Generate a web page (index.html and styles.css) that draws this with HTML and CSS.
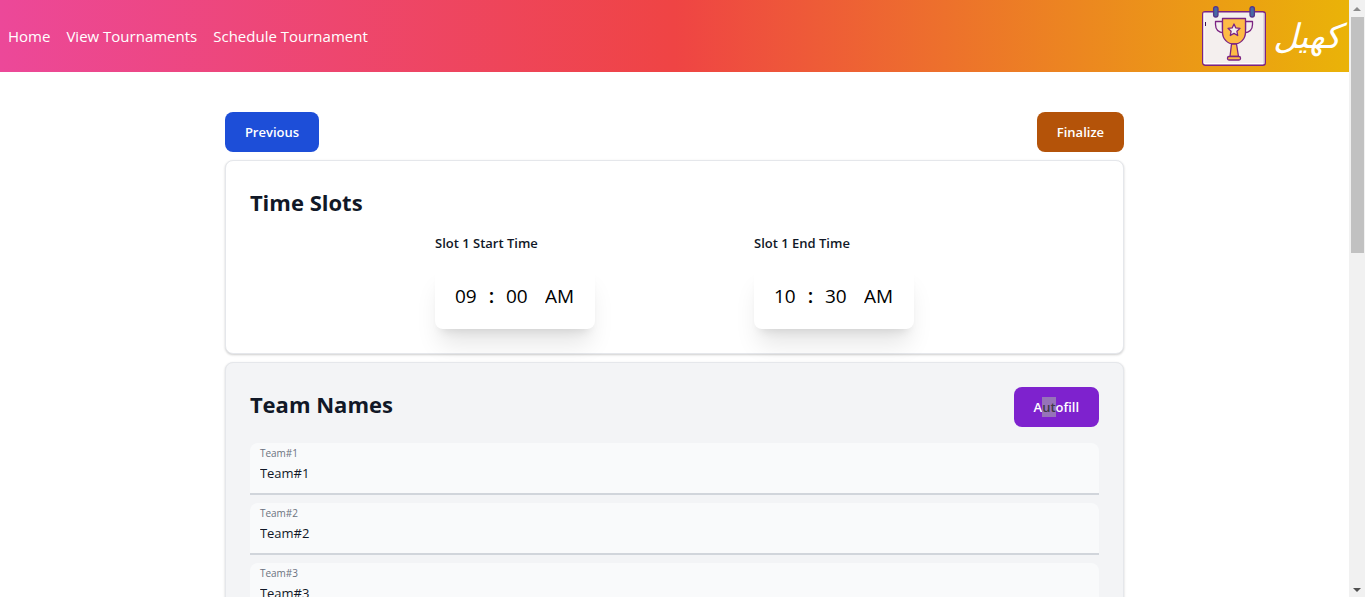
FILE: index.html
```html
<!DOCTYPE html>
<html lang="en">
<head>
<meta charset="utf-8">
<meta name="viewport" content="width=device-width, initial-scale=1">
<title>Schedule Tournament</title>
<link rel="stylesheet" href="styles.css">
</head>
<body>
<div class="shell">
  <div class="page">
    <header class="topbar">
      <nav class="nav">
        <a class="nav-link" href="#home">Home</a>
        <a class="nav-link" href="#tournaments">View Tournaments</a>
        <a class="nav-link" href="#schedule">Schedule Tournament</a>
      </nav>
      <div class="brand">
        <svg class="brand-icon" viewBox="0 0 70 68" width="70" height="68" aria-hidden="true">
          <rect x="3.7" y="9.7" width="62.6" height="53.6" rx="2.5" fill="#f4efee" stroke="#7b2382" stroke-width="1.4"/>
          <path d="M5 10.500V61.500H65" fill="none" stroke="#fff" stroke-width="1"/>
          <path d="M65 11V62" stroke="#cbbccd" stroke-width="1"/>
          <path d="M6.500 20v4" stroke="#3d1650" stroke-width="1"/>
          <rect x="14.600" y="4.600" width="4.400" height="10.400" rx="2.200" fill="#4768a5" stroke="#54358b" stroke-width="1.300"/>
          <rect x="51" y="4.600" width="4.400" height="10.400" rx="2.200" fill="#4768a5" stroke="#54358b" stroke-width="1.300"/>
          <g stroke="#7b2382" stroke-width="1.300" stroke-linejoin="round">
            <path d="M23.500 19.500h-7v3c0 5 3 8 8.500 8.500l-1.500-3.500z" fill="#f4efee"/>
            <path d="M46.500 19.500h7v3c0 5-3 8-8.500 8.500l1.500-3.500z" fill="#f4efee"/>
            <path d="M23.500 16.500h23V30c0 7-5 12-11.500 12s-11.500-5-11.500-12z" fill="#fdbb45"/>
            <path d="M32.500 42h5l2 12.500h-8.500z" fill="#fdbb45"/>
            <rect x="28.500" y="54.500" width="13" height="3.500" rx="1.500" fill="#fdbb45"/>
            <path d="M35 22l1.800 3.900 4.200.5-3.100 2.900.8 4.200-3.700-2.100-3.700 2.100.8-4.200-3.100-2.900 4.200-.5z" fill="#f4efee"/>
          </g>
        </svg>
        <span class="brand-name" lang="ur" dir="rtl">کھیل</span>
      </div>
    </header>

    <main class="content">
      <div class="actions">
        <button class="btn btn-blue" type="button">Previous</button>
        <button class="btn btn-orange" type="button">Finalize</button>
      </div>

      <section class="card">
        <h2 class="card-title">Time Slots</h2>
        <div class="slots">
          <fieldset class="slot">
            <legend class="slot-label">Slot 1 Start Time</legend>
            <div class="picker">
              <select class="pick" aria-label="Start hour"><option>09</option><option>10</option></select>
              <span class="colon">:</span>
              <select class="pick" aria-label="Start minute"><option>00</option><option>30</option></select>
              <select class="pick pick-period" aria-label="Start period"><option>AM</option><option>PM</option></select>
            </div>
          </fieldset>
          <fieldset class="slot">
            <legend class="slot-label">Slot 1 End Time</legend>
            <div class="picker">
              <select class="pick" aria-label="End hour"><option>10</option><option>11</option></select>
              <span class="colon">:</span>
              <select class="pick" aria-label="End minute"><option>30</option><option>00</option></select>
              <select class="pick pick-period" aria-label="End period"><option>AM</option><option>PM</option></select>
            </div>
          </fieldset>
        </div>
      </section>

      <section class="card card-muted">
        <div class="card-head">
          <h2 class="card-title">Team Names</h2>
          <button class="btn btn-purple" type="button">A<span class="selected">ut</span>ofill</button>
        </div>
        <div class="fields">
          <div class="field">
            <label class="field-label" for="team1">Team#1</label>
            <input class="field-input" id="team1" type="text" value="Team#1">
          </div>
          <div class="field">
            <label class="field-label" for="team2">Team#2</label>
            <input class="field-input" id="team2" type="text" value="Team#2">
          </div>
          <div class="field">
            <label class="field-label" for="team3">Team#3</label>
            <input class="field-input" id="team3" type="text" value="Team#3">
          </div>
        </div>
      </section>
    </main>
  </div>
  <div class="scrollbar" aria-hidden="true">
    <svg class="arrow" viewBox="0 0 16 17" width="16" height="17"><path d="M4 11L8 7L12 11Z" fill="#8c8c8c"/></svg>
    <div class="track"><div class="thumb"></div></div>
    <svg class="arrow" viewBox="0 0 16 17" width="16" height="17"><path d="M4 8L8 12L12 8Z" fill="#505050"/></svg>
  </div>
</div>
</body>
</html>
```
FILE: styles.css
```css
* {
  box-sizing: border-box;
}

body {
  margin: 0;
  background: #fff;
  color: #111827;
  font-family: "Open Sans", "Noto Sans", sans-serif;
  font-size: 14px;
  line-height: 20px;
}

.shell {
  display: flex;
  height: 100vh;
}

.page {
  flex: 1;
  min-width: 0;
  overflow-y: auto;
  scrollbar-width: none;
}

.topbar {
  display: flex;
  align-items: center;
  justify-content: space-between;
  height: 72px;
  padding: 0 8px;
  background: linear-gradient(to right, #ec4899, #ef4444, #eab308);
}

.nav {
  display: flex;
  gap: 16px;
}

.nav-link {
  color: #fff;
  font-size: 15px;
  line-height: 24px;
  text-decoration: none;
}

.brand {
  display: flex;
  align-items: center;
  gap: 4px;
}

.brand-icon {
  display: block;
}

.brand-name {
  color: #fff;
  font-family: "DejaVu Sans", sans-serif;
  font-size: 34px;
  font-style: italic;
  line-height: 56px;
}

.content {
  display: flex;
  flex-direction: column;
  gap: 8px;
  width: 66.66%;
  margin: 0 auto;
  padding: 40px 0;
}

.actions,
.card-head {
  display: flex;
  justify-content: space-between;
  align-items: flex-start;
}

.btn {
  padding: 10px 20px;
  border: 0;
  border-radius: 8px;
  color: #fff;
  font-family: inherit;
  font-size: 13px;
  font-weight: 600;
  line-height: 20px;
}

.btn-blue {
  background: #1d4ed8;
}

.btn-orange {
  background: #b45309;
}

.btn-purple {
  background: #7e22ce;
}

.selected {
  display: inline-block;
  background: #9673b9;
  color: #3f3a45;
}

.card {
  padding: 24px;
  border: 1px solid #e5e7eb;
  border-radius: 8px;
  background: #fff;
  box-shadow: 0 1px 3px rgba(0, 0, 0, 0.1), 0 1px 2px rgba(0, 0, 0, 0.1);
}

.card-muted {
  background: #f3f4f6;
}

.card-title {
  margin: 0;
  font-size: 22px;
  font-weight: 700;
  line-height: 34px;
}

.slots {
  display: flex;
  justify-content: center;
  gap: 159px;
  padding-top: 14px;
}

.slot {
  min-width: 0;
  margin: 0;
  padding: 0;
  border: 0;
}

.slot-label {
  padding: 0;
  font-size: 13px;
  font-weight: 600;
}

.picker {
  display: flex;
  align-items: center;
  width: 160px;
  margin-top: 12px;
  padding: 15px 20px 17px;
  border-radius: 8px;
  background: #fff;
  box-shadow: 0 20px 25px -5px rgba(0, 0, 0, 0.1), 0 8px 10px -6px rgba(0, 0, 0, 0.1);
}

.pick {
  appearance: none;
  margin: 0;
  padding: 0;
  border: 0;
  background: transparent;
  color: #000;
  font-family: inherit;
  font-size: 19px;
  font-weight: 400;
  line-height: 32px;
}

.pick-period {
  margin-left: auto;
}

.colon {
  width: 29px;
  color: #000;
  font-size: 20px;
  font-weight: 600;
  line-height: 32px;
  text-align: center;
}

.fields {
  display: flex;
  flex-direction: column;
  gap: 8px;
  padding-top: 16px;
}

.field {
  display: flex;
  flex-direction: column;
  padding: 2px 10px 8px;
  border-bottom: 2px solid #d1d5db;
  border-radius: 8px 8px 0 0;
  background: #f9fafb;
}

.field-label {
  color: #6b7280;
  font-size: 10px;
  line-height: 16px;
}

.field-input {
  width: 100%;
  height: 24px;
  padding: 0;
  border: 0;
  outline: 0;
  background: transparent;
  color: #111827;
  font-family: inherit;
  font-size: 13px;
  line-height: 24px;
}

.scrollbar {
  display: flex;
  flex-direction: column;
  width: 16px;
  background: #f1f1f1;
}

.arrow {
  display: block;
}

.track {
  flex: 1;
  padding: 0 1px 0 2px;
}

.thumb {
  height: 42%;
  background: #c1c1c1;
}
```
